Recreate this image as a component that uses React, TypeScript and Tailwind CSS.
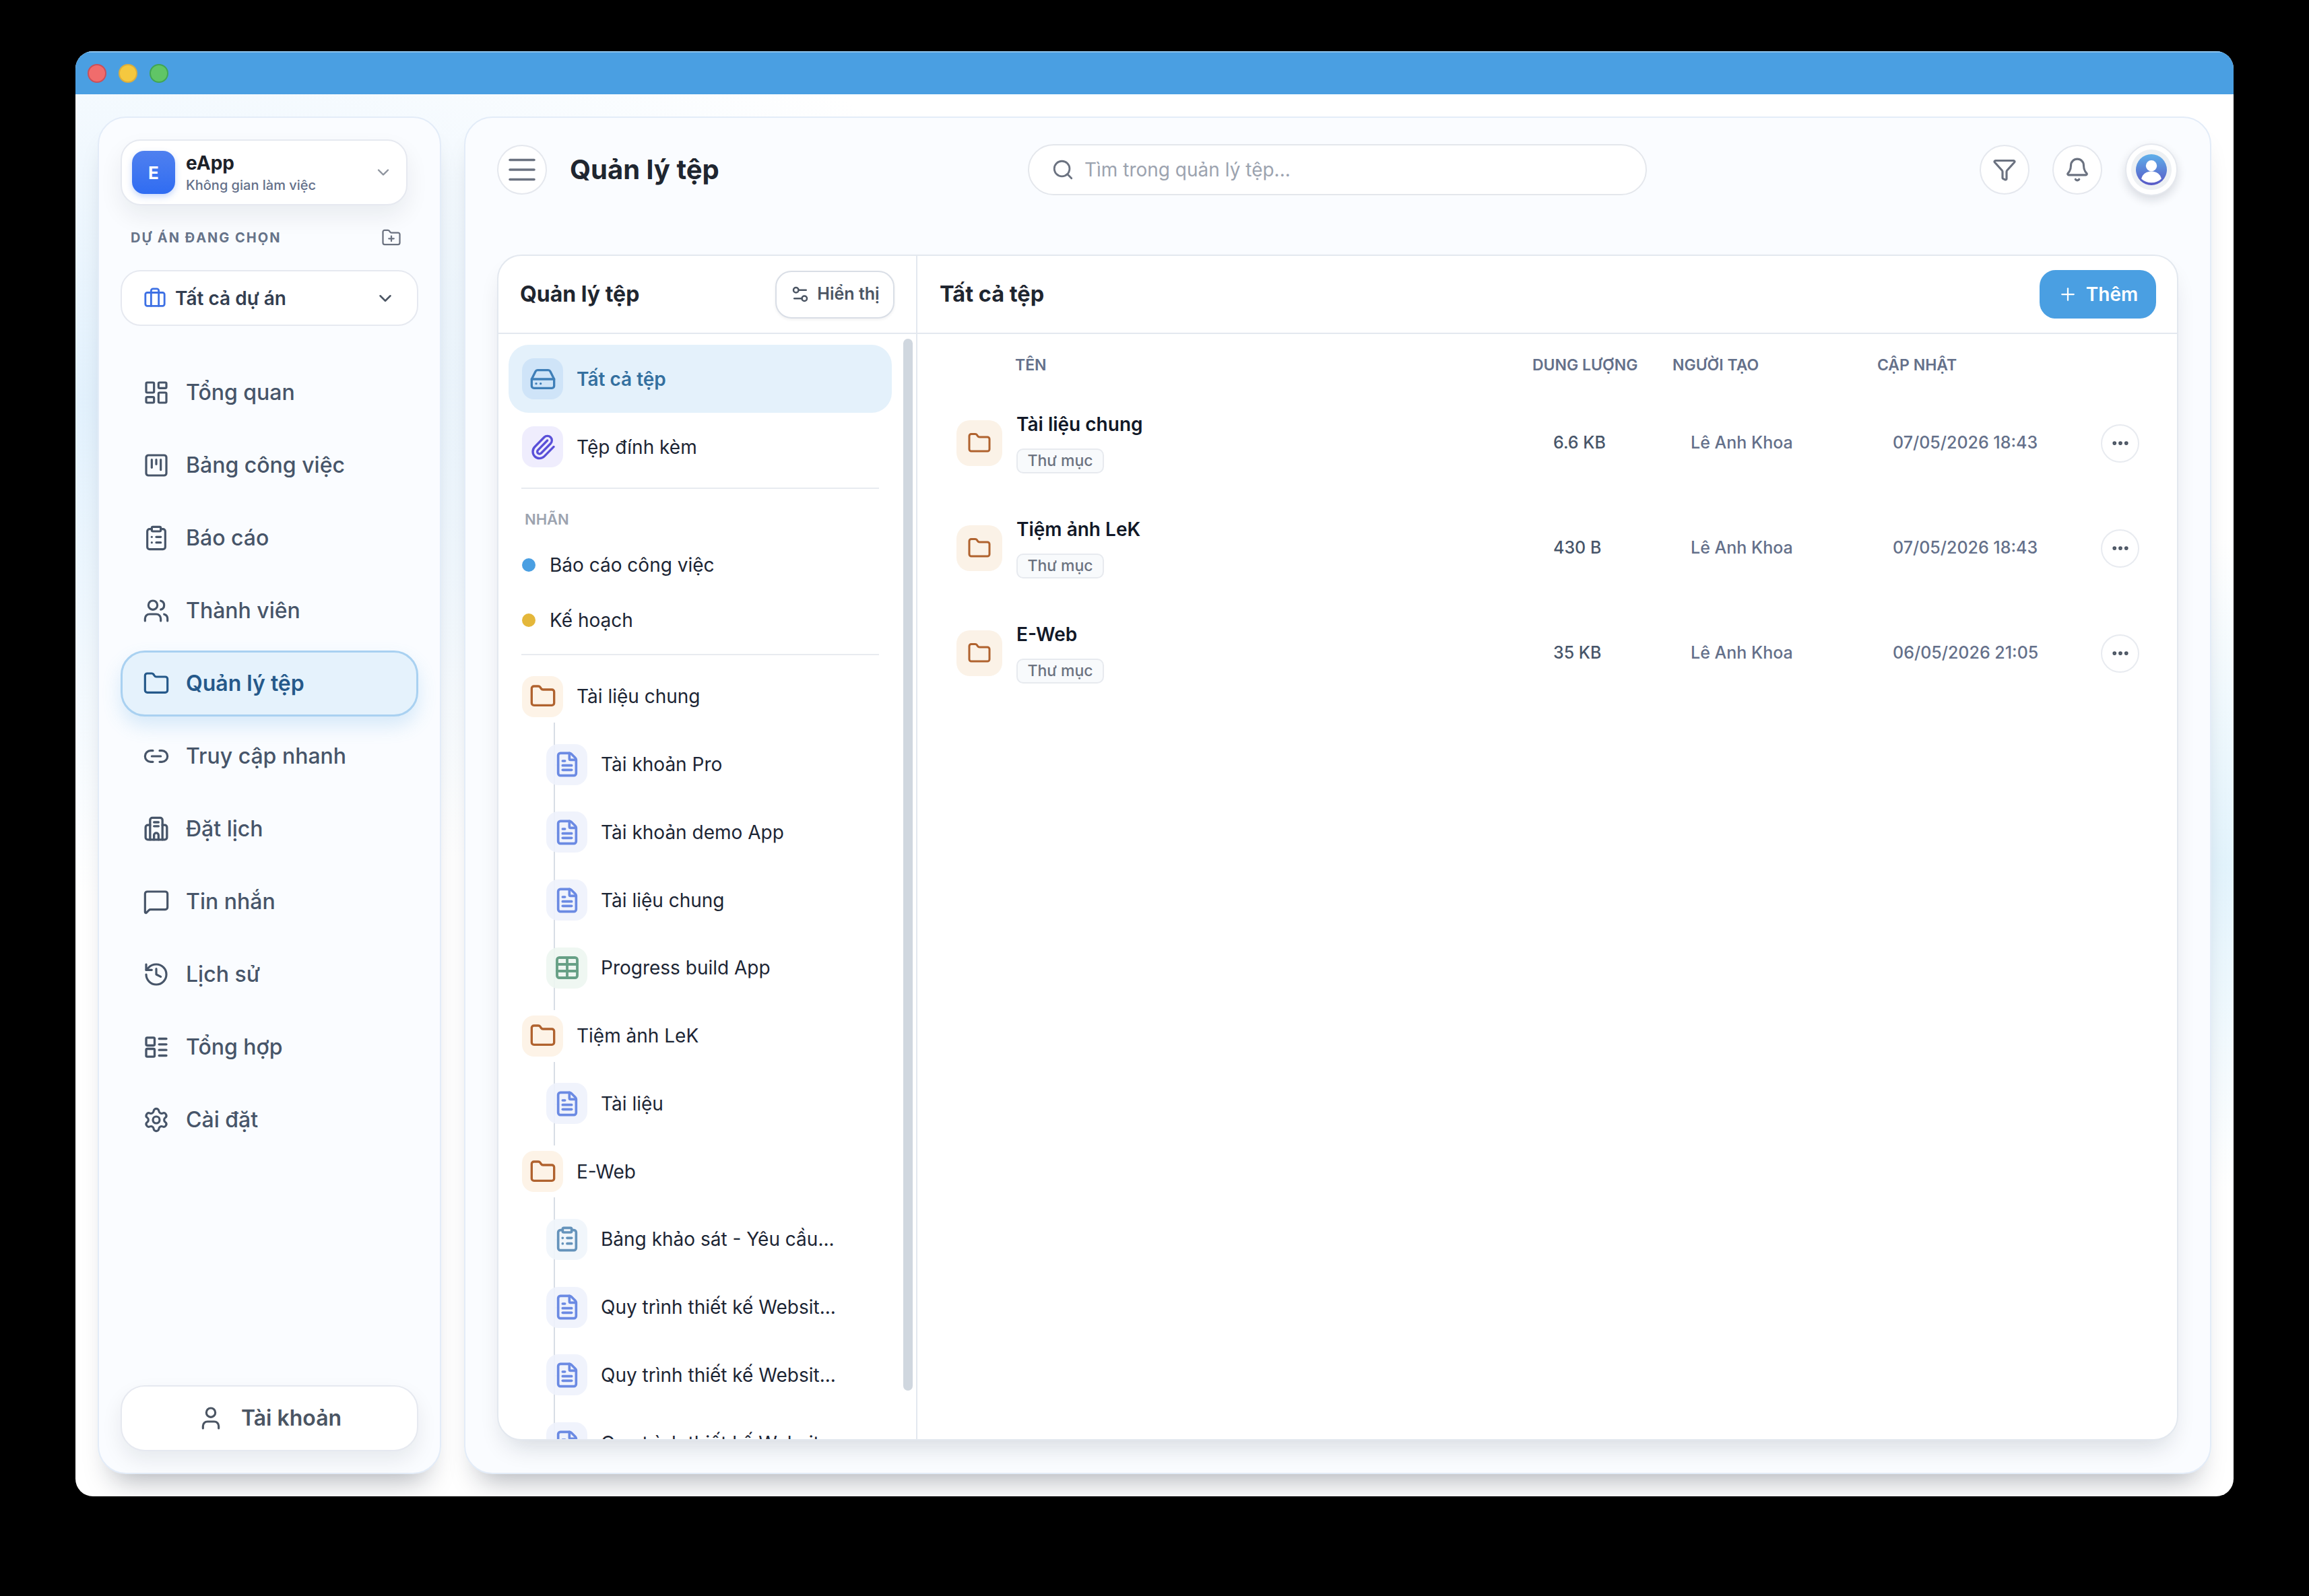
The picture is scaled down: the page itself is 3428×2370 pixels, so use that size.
import {
  Bell, Briefcase, ChevronDown, ClipboardList, Ellipsis, FileText, Folder, FolderPlus, Funnel, HardDrive,
  History, LayoutDashboard, Link2, MessageSquare, Paperclip, Plus, Search, Settings, Settings2, SquareKanban,
  Table, User, Users,
} from 'lucide-react';
import type { ComponentType, ReactNode } from 'react';

type IconType = ComponentType<{ className?: string; strokeWidth?: number }>;

function SummaryIcon({ className }: { className?: string }) {
  return (
    <svg viewBox="0 0 24 24" fill="none" stroke="currentColor" strokeWidth={2} strokeLinecap="round" strokeLinejoin="round" className={className}>
      <rect x="3" y="3.5" width="7.5" height="7" rx="1" />
      <rect x="3" y="13.5" width="7.5" height="7" rx="1" />
      <path d="M14.500 4.500H21M14.500 9.500H21M14.500 14.500H21M14.500 19.500H21" />
    </svg>
  );
}

function BuildingIcon({ className }: { className?: string }) {
  return (
    <svg viewBox="0 0 24 24" fill="none" stroke="currentColor" strokeWidth={2} strokeLinecap="round" strokeLinejoin="round" className={className}>
      <path d="M6.500 21.500V4a2 2 0 0 1 2-2h7a2 2 0 0 1 2 2v17.500" />
      <path d="M6.500 8.500H4.500a2 2 0 0 0-2 2v9a2 2 0 0 0 2 2h15a2 2 0 0 0 2-2v-9a2 2 0 0 0-2-2h-2" />
      <path d="M10 6h4M10 9.500h4" />
      <path d="M10 21.500v-4a2 2 0 0 1 4 0v4" />
    </svg>
  );
}

const navItems: { label: string; icon: IconType; active?: boolean }[] = [
  { label: 'Tổng quan', icon: LayoutDashboard },
  { label: 'Bảng công việc', icon: SquareKanban },
  { label: 'Báo cáo', icon: ClipboardList },
  { label: 'Thành viên', icon: Users },
  { label: 'Quản lý tệp', icon: Folder, active: true },
  { label: 'Truy cập nhanh', icon: Link2 },
  { label: 'Đặt lịch', icon: BuildingIcon },
  { label: 'Tin nhắn', icon: MessageSquare },
  { label: 'Lịch sử', icon: History },
  { label: 'Tổng hợp', icon: SummaryIcon },
  { label: 'Cài đặt', icon: Settings },
];

type Kind = 'doc' | 'sheet' | 'survey';
const tree: { name: string; children: { name: string; kind: Kind }[] }[] = [
  {
    name: 'Tài liệu chung',
    children: [
      { name: 'Tài khoản Pro', kind: 'doc' },
      { name: 'Tài khoản demo App', kind: 'doc' },
      { name: 'Tài liệu chung', kind: 'doc' },
      { name: 'Progress build App', kind: 'sheet' },
    ],
  },
  { name: 'Tiệm ảnh LeK', children: [{ name: 'Tài liệu', kind: 'doc' }] },
  {
    name: 'E-Web',
    children: [
      { name: 'Bảng khảo sát - Yêu cầu...', kind: 'survey' },
      { name: 'Quy trình thiết kế Websit...', kind: 'doc' },
      { name: 'Quy trình thiết kế Websit...', kind: 'doc' },
      { name: 'Quy trình thiết kế Websit...', kind: 'doc' },
    ],
  },
];

const files = [
  { name: 'Tài liệu chung', size: '6.6 KB', date: '07/05/2026 18:43' },
  { name: 'Tiệm ảnh LeK', size: '430 B', date: '07/05/2026 18:43' },
  { name: 'E-Web', size: '35 KB', date: '06/05/2026 21:05' },
];

function IconBox({ className, children }: { className: string; children: ReactNode }) {
  return <span className={`relative z-10 flex h-[61px] w-[61px] shrink-0 items-center justify-center rounded-[18px] ${className}`}>{children}</span>;
}

function ChildRow({ name, kind }: { name: string; kind: Kind }) {
  return (
    <div className="relative flex h-[100.75px] items-center gap-[20px] pl-[56px] text-[28px] text-[#1c2534]">
      <span className="absolute left-[67px] top-1/2 h-[2px] w-[14px] bg-[#d8dde5]" />
      {kind === 'doc' && (
        <IconBox className="bg-[#eef2fc]/90">
          <FileText className="h-[40px] w-[40px] text-[#6b8ae3]" strokeWidth={2.2} />
        </IconBox>
      )}
      {kind === 'sheet' && (
        <IconBox className="bg-[#edf6f1]/90">
          <Table className="h-[40px] w-[40px] text-[#67a086]" strokeWidth={2.3} />
        </IconBox>
      )}
      {kind === 'survey' && (
        <IconBox className="bg-[#eff5fb]/90">
          <ClipboardList className="h-[40px] w-[40px] text-[#6593bb]" strokeWidth={2.2} />
        </IconBox>
      )}
      <span className="whitespace-nowrap">{name}</span>
    </div>
  );
}

function CircleButton({ children }: { children: ReactNode }) {
  return <button className="flex h-[74px] w-[74px] items-center justify-center rounded-full border-2 border-[#e5e8ee] bg-white">{children}</button>;
}

export default function App() {
  return (
    <div className="h-[2370px] w-[3428px] overflow-hidden bg-black pl-[112px] pt-[76px] [font-family:Inter,sans-serif]">
      <div className="flex h-[2146px] w-[3204px] flex-col overflow-hidden rounded-[26px] bg-white">
        <div className="flex h-[64px] shrink-0 items-center gap-[18px] border-t-2 border-[#8cc2ec] bg-[#4a9fe2] pl-[18px]">
          <span className="h-[28px] w-[28px] rounded-full border-2 border-[#c9505a] bg-[#f06c6c]" />
          <span className="h-[28px] w-[28px] rounded-full border-2 border-[#dcae3c] bg-[#f5c83f]" />
          <span className="h-[28px] w-[28px] rounded-full border-2 border-[#41a653] bg-[#60c566]" />
        </div>

        <div className="flex min-h-0 flex-1 gap-[34px] bg-[radial-gradient(ellipse_at_0%_22%,#e2f1fd_0%,rgba(255,255,255,0)_32%),radial-gradient(ellipse_at_100%_55%,#e2f3fc_0%,rgba(255,255,255,0)_30%)] p-[33px_33px_33px_33px]">
          {/* Sidebar */}
          <aside className="flex w-[510px] shrink-0 flex-col rounded-[42px] border-2 border-[#e3ecf8] bg-[#fafcff] pb-[32px] pl-[32px] pr-[31px] pt-[32px] shadow-[0_30px_40px_-22px_rgba(15,23,42,0.34)]">
            <div className="flex h-[98px] w-[426px] items-center rounded-[30px] border-2 border-[#e6e9f0] bg-white pl-[15px] pr-[20px] shadow-[0_16px_34px_rgba(15,23,42,0.07)]">
              <span className="flex h-[64px] w-[64px] items-center justify-center rounded-[18px] bg-gradient-to-b from-[#4f80ef] to-[#2f6cf2] text-[26px] font-bold text-white shadow-[0_4px_10px_rgba(37,99,235,0.25)]">E</span>
              <div className="ml-[16px] min-w-0 flex-1">
                <div className="text-[28px] font-bold leading-[34px] text-[#1c2129]">eApp</div>
                <div className="mt-[3px] h-[26px] overflow-hidden text-[20px] font-medium leading-[26px] text-[#64708a]">Không gian làm việc</div>
              </div>
              <ChevronDown className="h-[28px] w-[28px] text-[#8d939d]" />
            </div>

            <div className="mt-[34px] flex h-[28px] w-[426px] items-center justify-between pl-[15px] pr-[9px]">
              <span className="text-[20px] font-bold tracking-[2px] text-[#667389]">DỰ ÁN ĐANG CHỌN</span>
              <FolderPlus className="h-[30px] w-[30px] text-[#6b7280]" strokeWidth={1.8} />
            </div>

            <div className="mt-[34px] flex h-[83px] w-[442px] items-center rounded-[30px] border-2 border-[#e6e9f0] bg-white pl-[32px] pr-[32px]">
              <Briefcase className="h-[34px] w-[34px] text-[#3d70e4]" />
              <span className="ml-[13px] flex-1 text-[28px] font-semibold text-[#333e50]">Tất cả dự án</span>
              <ChevronDown className="h-[30px] w-[30px] text-[#4b5563]" />
            </div>

            <nav className="mt-[50px] flex flex-col gap-[10px]">
              {navItems.map(({ label, icon: Icon, active }) => (
                <div
                  key={label}
                  className={`flex h-[98px] w-[442px] items-center gap-[24px] rounded-[36px] border-[3px] pl-[30px] text-[32px] ${
                    active
                      ? 'border-[#a9d1f1] bg-[#e5f2fc] font-semibold text-[#25598a] shadow-[0_14px_28px_rgba(74,159,226,0.2)]'
                      : 'border-transparent font-medium text-[#475569]'
                  }`}
                >
                  <Icon className="h-[40px] w-[40px] shrink-0" strokeWidth={1.9} />
                  <span>{label}</span>
                </div>
              ))}
            </nav>

            <button className="mt-auto flex h-[98px] w-[442px] items-center justify-center gap-[25px] rounded-[36px] border-2 border-[#e6e9f0] bg-white text-[32px] font-semibold text-[#4b5563] shadow-[0_14px_30px_rgba(15,23,42,0.08)]">
              <User className="h-[40px] w-[40px]" strokeWidth={1.9} />
              Tài khoản
            </button>
          </aside>

          {/* Main */}
          <main className="flex min-w-0 flex-1 flex-col rounded-[42px] border-2 border-[#e3ecf8] bg-[#fafcff] px-[47px] pb-[48px] pt-[39px] shadow-[0_30px_40px_-22px_rgba(15,23,42,0.34)]">
            <header className="flex h-[76px] shrink-0 items-center">
              <div className="flex w-[788px] items-center gap-[34px]">
                <CircleButton>
                  <svg viewBox="0 0 40 36" fill="none" stroke="currentColor" strokeWidth={3.6} strokeLinecap="round" className="h-[36px] w-[40px] text-[#6b7280]">
                    <path d="M2 3.500H38M2 18H38M2 32.500H38" />
                  </svg>
                </CircleButton>
                <h1 className="text-[40px] font-bold text-[#1f2630]">Quản lý tệp</h1>
              </div>
              <div className="flex h-[76px] w-[919px] items-center gap-[15px] rounded-full border-2 border-[#e4e7ec] bg-white pl-[33px]">
                <Search className="h-[34px] w-[34px] text-[#6b7280]" />
                <span className="text-[28px] text-[#9ca3af]">Tìm trong quản lý tệp...</span>
              </div>
              <div className="ml-auto mr-[1px] flex items-center gap-[34px]">
                <CircleButton>
                  <Funnel className="h-[36px] w-[36px] text-[#6b7280]" strokeWidth={2.1} />
                </CircleButton>
                <CircleButton>
                  <Bell className="h-[38px] w-[38px] text-[#6b7280]" />
                </CircleButton>
                <button className="flex h-[78px] w-[78px] items-center justify-center rounded-full border-2 border-[#e5e8ee] bg-white shadow-[0_6px_14px_rgba(15,23,42,0.14)]">
                  <span className="flex h-[60px] w-[60px] items-center justify-center rounded-full bg-[#edf0f3]">
                    <svg viewBox="0 0 48 48" className="h-[46px] w-[46px]">
                      <defs>
                        <linearGradient id="avatarGrad" x1="0" y1="0" x2="0" y2="1">
                          <stop offset="0" stopColor="#5fb0ea" />
                          <stop offset="1" stopColor="#5858c6" />
                        </linearGradient>
                      </defs>
                      <circle cx="24" cy="24" r="24" fill="url(#avatarGrad)" />
                      <circle cx="24" cy="18" r="8.500" fill="#fff" />
                      <path d="M8.500 38c2-8 8-11.500 15.500-11.500S37.500 30 39.500 38C35.500 42 30 44 24 44S12.500 42 8.500 38Z" fill="#fff" />
                    </svg>
                  </span>
                </button>
              </div>
            </header>

            <div className="mt-[88px] flex min-h-0 flex-1 overflow-hidden rounded-[36px] border-2 border-[#e3e8ef] bg-white shadow-[0_20px_36px_-12px_rgba(15,23,42,0.16)]">
              {/* Tree column */}
              <section className="flex w-[622px] shrink-0 flex-col border-r-2 border-[#e3e8ef]">
                <div className="flex h-[116px] shrink-0 items-center justify-between border-b-2 border-[#e3e8ef] pl-[32px] pr-[32px]">
                  <h2 className="text-[32px] font-bold text-[#1f2630]">Quản lý tệp</h2>
                  <button className="flex h-[71px] w-[177px] items-center justify-center gap-[10px] rounded-[24px] border-2 border-[#d9dee6] bg-white text-[25px] font-semibold text-[#4b5563] shadow-[0_2px_4px_rgba(15,23,42,0.06)]">
                    <Settings2 className="h-[30px] w-[30px]" />
                    Hiển thị
                  </button>
                </div>

                <div className="relative min-h-0 flex-1 overflow-hidden">
                  <span className="absolute left-[601px] top-[7px] h-[1562px] w-[14px] rounded-full bg-[#d0d7df]" />
                  <div className="ml-[15px] w-[569px] pt-[16px]">
                    <div className="flex h-[101px] items-center gap-[20px] rounded-[30px] bg-[#e4f1fb] pl-[20px] text-[28px] font-semibold text-[#34709f]">
                      <IconBox className="bg-[#cfe4f8]">
                        <HardDrive className="h-[40px] w-[40px] text-[#3f7fb8]" />
                      </IconBox>
                      Tất cả tệp
                    </div>
                    <div className="flex h-[101px] items-center gap-[20px] pl-[20px] text-[28px] text-[#1c2534]">
                      <IconBox className="bg-[#efedfd]">
                        <Paperclip className="h-[40px] w-[40px] text-[#5a50d8]" />
                      </IconBox>
                      Tệp đính kèm
                    </div>
                    <div className="ml-[19px] mr-[19px] mt-[10px] h-[2px] bg-[#e8ebf0]" />
                    <div className="pb-[14px] pl-[24px] pt-[32px] text-[22px] font-semibold leading-[26px] text-[#9ca3af]">NHÃN</div>
                    <div className="flex h-[82px] items-center gap-[21px] pl-[20px] text-[28px] text-[#1c2534]">
                      <span className="h-[20px] w-[20px] rounded-full bg-[#4a9fe2]" />
                      Báo cáo công việc
                    </div>
                    <div className="flex h-[82px] items-center gap-[21px] pl-[20px] text-[28px] text-[#1c2534]">
                      <span className="h-[20px] w-[20px] rounded-full bg-[#e4b73a]" />
                      Kế hoạch
                    </div>
                    <div className="ml-[19px] mr-[19px] mt-[9px] h-[2px] bg-[#e8ebf0]" />
                    <div className="mt-[11px]">
                      {tree.map((group) => (
                        <div key={group.name}>
                          <div className="flex h-[100.75px] items-center gap-[20px] pl-[20px] text-[28px] text-[#1c2534]">
                            <IconBox className="bg-[#fdf3e7]">
                              <Folder className="h-[40px] w-[40px] text-[#b0622e]" />
                            </IconBox>
                            {group.name}
                          </div>
                          <div className="relative">
                            <span className="absolute bottom-[-12px] left-[67px] top-[-12px] w-[2px] bg-[#d8dde5]" />
                            {group.children.map((child, i) => (
                              <ChildRow key={i} name={child.name} kind={child.kind} />
                            ))}
                          </div>
                        </div>
                      ))}
                    </div>
                  </div>
                </div>
              </section>

              {/* File table */}
              <section className="flex min-w-0 flex-1 flex-col">
                <div className="flex h-[116px] shrink-0 items-center justify-between border-b-2 border-[#e3e8ef] pl-[33px] pr-[31px]">
                  <h2 className="text-[32.500px] font-bold text-[#1f2630]">Tất cả tệp</h2>
                  <button className="flex h-[72px] w-[173px] items-center justify-center gap-[12px] rounded-[24px] bg-[#4a9fe2] text-[28px] font-semibold text-white">
                    <Plus className="h-[30px] w-[30px]" strokeWidth={1.8} />
                    Thêm
                  </button>
                </div>

                <div className="grid h-[82px] grid-cols-[913px_208px_304px_332px_1fr] items-center pt-[11px] text-[23px] font-semibold text-[#64708a]">
                  <span className="pl-[145px]">TÊN</span>
                  <span>DUNG LƯỢNG</span>
                  <span>NGƯỜI TẠO</span>
                  <span>CẬP NHẬT</span>
                </div>

                <div className="pt-[2px]">
                  {files.map((f) => (
                    <div key={f.name} className="grid h-[156px] grid-cols-[913px_208px_304px_332px_1fr] items-center text-[25px] font-medium">
                      <div className="flex items-center gap-[21px] pl-[58px]">
                        <span className="flex h-[68px] w-[68px] items-center justify-center rounded-[20px] bg-[#fbf2e7]">
                          <Folder className="h-[36px] w-[36px] text-[#b0622e]" />
                        </span>
                        <div className="flex flex-col items-start gap-[19px]">
                          <span className="text-[28px] font-semibold leading-[34px] text-[#111827]">{f.name}</span>
                          <span className="flex h-[37px] w-[130px] items-center justify-center rounded-[10px] border-2 border-[#e7eaef] bg-[#f8fafc] text-[23px] font-medium text-[#6b7280]">Thư mục</span>
                        </div>
                      </div>
                      <span className="pl-[31px] text-[#475569]">{f.size}</span>
                      <span className="pl-[27px] text-[#64708a]">Lê Anh Khoa</span>
                      <span className="pl-[23px] text-[#64708a]">{f.date}</span>
                      <button className="flex h-[57px] w-[57px] items-center justify-center rounded-full border-2 border-[#e8ebf0] bg-white">
                        <Ellipsis className="h-[30px] w-[30px] text-[#4b5563]" strokeWidth={2.6} />
                      </button>
                    </div>
                  ))}
                </div>
              </section>
            </div>
          </main>
        </div>
      </div>
    </div>
  );
}
